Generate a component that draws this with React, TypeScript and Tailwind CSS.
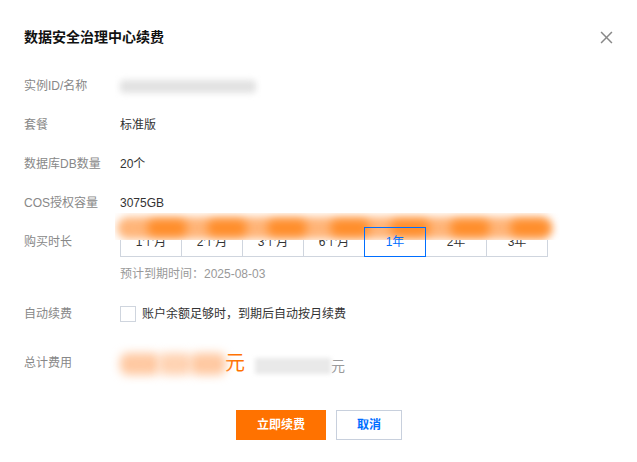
import { useState } from "react";

const tabs = ["1个月", "2个月", "3个月", "6个月", "1年", "2年", "3年"];

function Row({ label, children }: { label: string; children: React.ReactNode }) {
  return (
    <div className="flex items-center h-[20px]">
      <span className="w-[96px] text-[12px] text-[#888]">{label}</span>
      <div className="text-[12px] text-[#333]">{children}</div>
    </div>
  );
}

export default function App() {
  const [selected, setSelected] = useState("1年");
  const [auto, setAuto] = useState(false);

  return (
    <div
      className="relative w-[637px] h-[462px] bg-white overflow-hidden"
      style={{ fontFamily: '"Liberation Sans", "Noto Sans CJK SC", sans-serif' }}
    >
      {/* header */}
      <div className="flex items-center justify-between h-[20px] mt-[27px] pl-6 pr-[24px]">
        <h2 className="text-[14px] font-bold text-[#111]">数据安全治理中心续费</h2>
        <button className="w-[14px] h-[14px] flex items-center justify-center text-[#888]">
          <svg className="w-[13px] h-[13px]" viewBox="0 0 12 12" fill="none" stroke="currentColor" strokeWidth="1.4">
            <line x1="1" y1="1" x2="11" y2="11" />
            <line x1="11" y1="1" x2="1" y2="11" />
          </svg>
        </button>
      </div>

      <div className="px-6">
        <div className="flex flex-col gap-[19px] mt-[29px]">
          <Row label="实例ID/名称">
            <div className="w-[136px] h-[13px] rounded bg-[#e2e2e2] blur-[3px]" />
          </Row>
          <Row label="套餐">标准版</Row>
          <Row label="数据库DB数量">20个</Row>
          <Row label="COS授权容量">3075GB</Row>
        </div>

        {/* duration */}
        <div className="flex items-center mt-[14px]">
          <span className="w-[96px] text-[12px] text-[#888]">购买时长</span>
          <div className="flex">
            {tabs.map((t, i) => (
              <button
                key={t}
                onClick={() => setSelected(t)}
                className={
                  "relative w-[62px] h-[30px] border text-[12px] flex items-center justify-center " +
                  (i > 0 ? "-ml-px " : "") +
                  (selected === t ? "z-10 border-[#006eff] text-[#006eff]" : "border-[#cfd5de] text-[#333]")
                }
              >
                {t}
              </button>
            ))}
          </div>
        </div>
        <div className="ml-[96px] mt-[8px] h-[18px] flex items-center text-[12px] text-[#999]">
          预计到期时间：2025-08-03
        </div>

        {/* auto renew */}
        <div className="flex items-center h-[20px] mt-[21px]">
          <span className="w-[96px] text-[12px] text-[#888]">自动续费</span>
          <label className="flex items-center gap-[6px] text-[12px] text-[#333] cursor-pointer">
            <span
              onClick={() => setAuto(!auto)}
              className={"w-[16px] h-[16px] border " + (auto ? "border-[#006eff] bg-[#006eff]" : "border-[#cfd5de] bg-white")}
            />
            账户余额足够时，到期后自动按月续费
          </label>
        </div>

        {/* total */}
        <div className="flex items-center h-[28px] mt-[25px]">
          <span className="w-[96px] text-[12px] text-[#888]">总计费用</span>
          <div className="flex items-center">
            <div className="relative w-[105px] h-[28px]">
              <div className="absolute left-[0px] top-[4px] w-[40px] h-[22px] rounded-[8px] bg-[#ffc9a2] blur-[5px]" />
              <div className="absolute left-[38px] top-[4px] w-[34px] h-[22px] rounded-[8px] bg-[#ffd3b3] blur-[5px]" />
              <div className="absolute left-[70px] top-[4px] w-[36px] h-[22px] rounded-[8px] bg-[#ffc9a2] blur-[5px]" />
            </div>
            <span className="text-[20px] leading-[28px] text-[#ff7200]">元</span>
            <div className="ml-[10px] w-[76px] h-[16px] mt-[6px] bg-[#e9e9e9] blur-[2px]" />
            <span className="text-[14px] text-[#999] mt-[6px]">元</span>
          </div>
        </div>

        {/* buttons */}
        <div className="flex justify-center gap-[10px] mt-[33px] ml-[1px]">
          <button className="w-[90px] h-[30px] bg-[#ff7200] text-white text-[12px] font-bold">立即续费</button>
          <button className="w-[66px] h-[30px] border border-[#c8d0dd] text-[#006eff] text-[12px] font-bold bg-white">取消</button>
        </div>
      </div>

      {/* redaction band over the duration tabs */}
      <div className="absolute left-[115px] top-[213px] w-[445px] h-[27px] bg-white overflow-hidden">
        <div className="absolute left-[2px] right-[8px] top-[4px] h-[22px] rounded-full bg-[#ffb579] blur-[4px]" />
        {[52, 112, 172, 235, 295, 355, 415].map((x) => (
          <div
            key={x}
            className="absolute top-[7px] w-[40px] h-[16px] rounded-full bg-[#ff8c28] blur-[5px]"
            style={{ left: x - 20 }}
          />
        ))}
      </div>
    </div>
  );
}
